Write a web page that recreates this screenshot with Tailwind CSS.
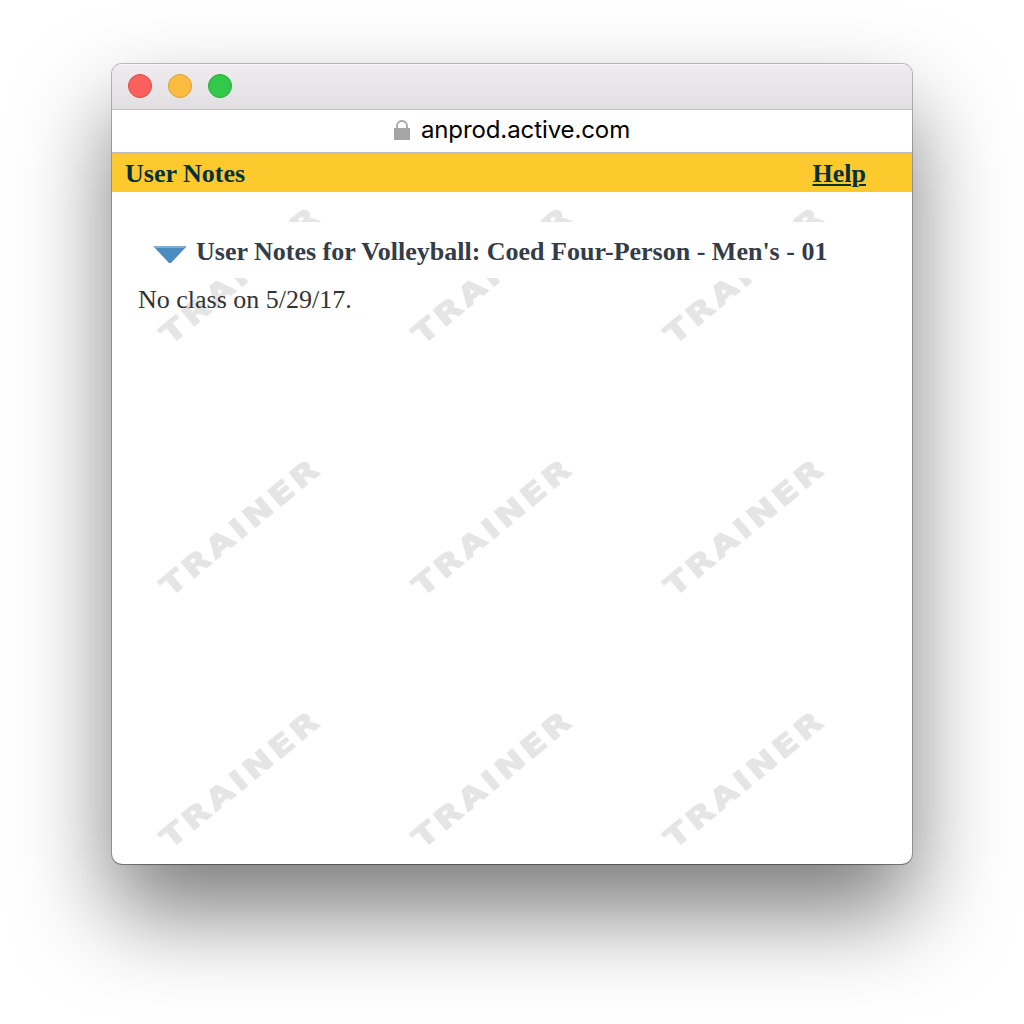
<!DOCTYPE html>
<html lang="en">
<head>
<meta charset="utf-8">
<title>User Notes</title>
<script src="https://cdn.jsdelivr.net/npm/@tailwindcss/browser@4"></script>
</head>
<body class="bg-white w-[1024px] h-[1024px] overflow-hidden px-28 pt-16">
<main class="w-[800px] h-[800px] rounded-[10px] overflow-hidden bg-white flex flex-col shadow-[0_0_0_1px_rgba(0,0,0,0.24),0_1px_1px_rgba(0,0,0,0.2),0_48px_92px_rgba(0,0,0,0.52)]">
  <div class="h-[46px] shrink-0 flex items-start gap-4 px-4 pt-[10px] bg-linear-to-b from-[#eeecef] to-[#e1dfe2] border-t border-t-[#f6f5f7] border-b border-b-[#c2c1c3]">
    <span class="size-6 -mt-px rounded-full bg-[#fc605c] border border-[#df4744]"></span>
    <span class="size-6 -mt-px rounded-full bg-[#fdbc40] border border-[#de9f34]"></span>
    <span class="size-6 -mt-px rounded-full bg-[#34c84a] border border-[#27aa35]"></span>
  </div>
  <div class="h-11 shrink-0 flex justify-center border-b-2 border-b-[#bebebe] font-[Inter] text-[24px] leading-[40px] tracking-[-0.1px] text-black">
    <svg class="w-4 h-5 mt-[10px] mr-[11px]" viewBox="0 0 16 20"><path d="M0 8h16v12H0z" fill="#a5a5a5"/><path d="M3 9V6a5 5 0 0 1 10 0v3" fill="none" stroke="#a5a5a5" stroke-width="1.8"/></svg>
    <span>anprod.active.com</span>
  </div>
  <div class="h-[38px] shrink-0 flex justify-between pl-[13px] pr-[46px] bg-[#fdca2e] text-[#03303a] font-['Liberation_Serif',serif] font-bold text-[26px] leading-[40px]">
    <span>User Notes</span>
    <a class="underline decoration-2 underline-offset-2">Help</a>
  </div>
  <div class="relative grow font-['Liberation_Serif',serif] text-[26px]">
    <svg class="absolute inset-0 w-[800px] h-[672px]" viewBox="0 0 800 672">
      <defs>
        <pattern id="mark" width="252" height="252" patternUnits="userSpaceOnUse">
          <text transform="translate(58.5 153.5) rotate(-39.6) scale(1.25 1)" font-family="DejaVu Sans, sans-serif" font-weight="700" font-size="28" letter-spacing="3.2" fill="#e5e5e5" stroke="#e5e5e5" stroke-width="1.2" stroke-linejoin="round">TRAINER</text>
        </pattern>
      </defs>
      <rect width="756" height="672" fill="url(#mark)"/>
    </svg>
    <div class="relative pt-[30px]">
      <h1 class="bg-white h-14 flex items-center pl-[42px] font-bold text-[#333c48]">
        <svg class="w-8 h-[17px] mr-[10px] mt-[9px]" viewBox="0 0 32 17"><path d="M0 0h32v1L17 17h-2L0 1z" fill="#4a8bc0"/><path d="M0 0h32l-2 2H2z" fill="#81afd3"/></svg>
        <span class="pt-0.5">User Notes for Volleyball: Coed Four-Person - Men's - 01</span>
      </h1>
      <p class="pl-[26px] pt-[3px] leading-[38px] text-[#333]">No class on 5/29/17.</p>
    </div>
  </div>
</main>
</body>
</html>
